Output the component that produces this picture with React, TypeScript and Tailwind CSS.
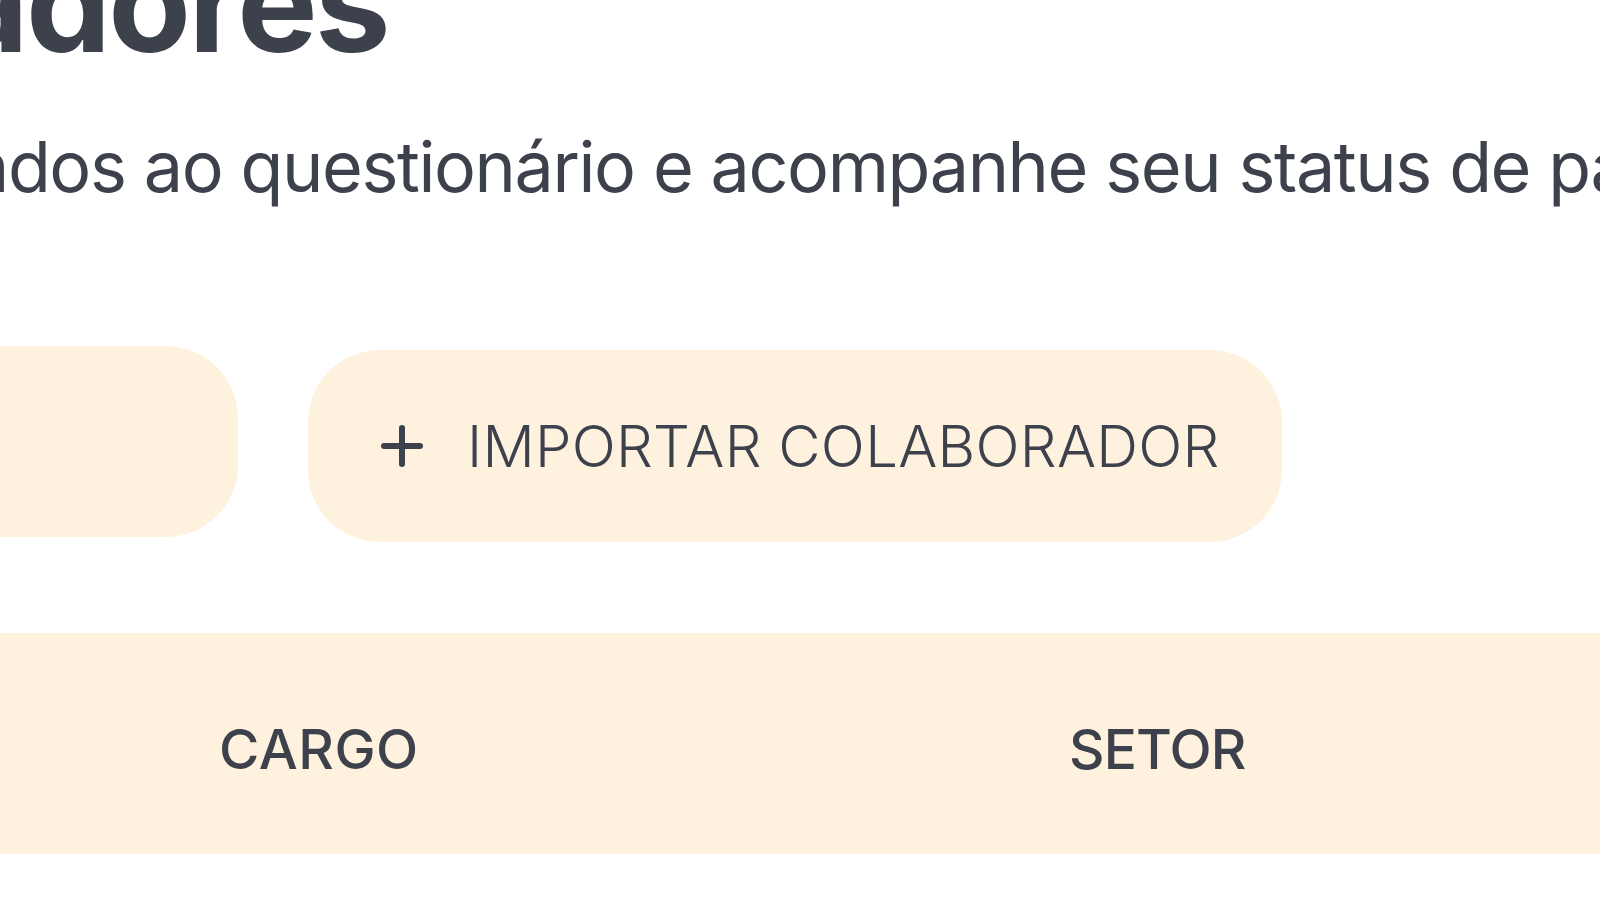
import type { ReactNode } from 'react';

// Page fragment: "Colaboradores" header, actions and the table header (zoomed view)

function PlusIcon() {
  return (
    <svg width="42" height="42" viewBox="0 0 42 42" fill="none" aria-hidden="true">
      <path d="M21 3v36M3 21h36" stroke="currentColor" strokeWidth="6" strokeLinecap="round" />
    </svg>
  );
}

function HeaderCell({ children, className = '' }: { children: ReactNode; className?: string }) {
  return (
    <div className={`text-[55px] font-medium leading-none whitespace-nowrap ${className}`}>
      {children}
    </div>
  );
}

export default function App() {
  return (
    <div className="w-[1600px] h-[900px] overflow-hidden bg-white font-['Inter','Liberation_Sans',sans-serif] text-[#3d414c]">
      {/* Title */}
      <div className="flex justify-end w-[388px]">
        <h1 className="-mt-[64px] whitespace-nowrap text-[135px] font-bold leading-none tracking-[-0.02em]">
          Colaboradores
        </h1>
      </div>

      {/* Subtitle */}
      <p className="mt-[61px] -ml-[30px] whitespace-nowrap text-[70px] font-normal leading-none tracking-[-0.02em]">
        ados ao questionário e acompanhe seu status de participação.
      </p>

      {/* Actions */}
      <div className="mt-[144px] flex items-start gap-[70px]">
        <div className="-ml-[462px] h-[191px] w-[700px] shrink-0 rounded-[72px] bg-[#fef1de]" />
        <button
          type="button"
          className="mt-[4px] flex h-[192px] w-[974px] shrink-0 items-center gap-[44px] rounded-[72px] bg-[#fef1de] pl-[73px] text-[58px] font-light leading-none tracking-[0.005em] whitespace-nowrap"
        >
          <PlusIcon />
          <span>IMPORTAR COLABORADOR</span>
        </button>
      </div>

      {/* Table header */}
      <div className="mt-[91px] flex h-[221px] items-center bg-[#fef1de] pl-[219px] pt-[12px]">
        <HeaderCell className="w-[850px] shrink-0 tracking-[0.01em]">CARGO</HeaderCell>
        <HeaderCell className="tracking-[-0.015em]">SETOR</HeaderCell>
      </div>
    </div>
  );
}
